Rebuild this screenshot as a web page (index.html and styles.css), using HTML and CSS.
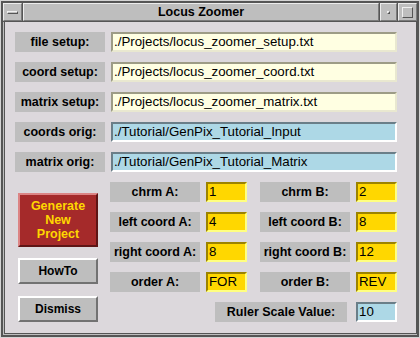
FILE: index.html
```html
<!DOCTYPE html>
<html lang="en">
<head>
    <meta charset="UTF-8">
    <meta name="viewport" content="width=device-width, initial-scale=1.0">
    <title>Locus Zoomer</title>
    <link rel="stylesheet" href="styles.css">
</head>
<body>
    <div class="window">
        <div class="titlebar">
            <div class="tb-btn tb-menu"><span class="menu-bar"></span></div>
            <div class="tb-title">Locus Zoomer</div>
            <div class="tb-btn tb-min"><span class="min-dot"></span></div>
            <div class="tb-btn tb-max"><span class="max-box"></span></div>
        </div>
        <main class="body">
            <div class="paths">
                <div class="label">file setup:</div>
                <input class="entry ivory" type="text" value="./Projects/locus_zoomer_setup.txt">
                <div class="label">coord setup:</div>
                <input class="entry ivory" type="text" value="./Projects/locus_zoomer_coord.txt">
                <div class="label">matrix setup:</div>
                <input class="entry ivory" type="text" value="./Projects/locus_zoomer_matrix.txt">
                <div class="label">coords orig:</div>
                <input class="entry blue" type="text" value="./Tutorial/GenPix_Tutorial_Input">
                <div class="label">matrix orig:</div>
                <input class="entry blue" type="text" value="./Tutorial/GenPix_Tutorial_Matrix">
            </div>
            <div class="lower">
                <div class="buttons">
                    <button class="btn btn-generate">Generate<br>New<br>Project</button>
                    <button class="btn">HowTo</button>
                    <button class="btn btn-dismiss">Dismiss</button>
                </div>
                <div class="params">
                    <div class="param-row">
                        <div class="label">chrm A:</div>
                        <input class="entry gold" type="text" value="1">
                        <div class="label label-b">chrm B:</div>
                        <input class="entry gold" type="text" value="2">
                    </div>
                    <div class="param-row">
                        <div class="label">left coord A:</div>
                        <input class="entry gold" type="text" value="4">
                        <div class="label label-b">left coord B:</div>
                        <input class="entry gold" type="text" value="8">
                    </div>
                    <div class="param-row">
                        <div class="label">right coord A:</div>
                        <input class="entry gold" type="text" value="8">
                        <div class="label label-b">right coord B:</div>
                        <input class="entry gold" type="text" value="12">
                    </div>
                    <div class="param-row">
                        <div class="label">order A:</div>
                        <input class="entry gold" type="text" value="FOR">
                        <div class="label label-b">order B:</div>
                        <input class="entry gold" type="text" value="REV">
                    </div>
                    <div class="param-row ruler">
                        <div class="label label-ruler">Ruler Scale Value:</div>
                        <input class="entry blue" type="text" value="10">
                    </div>
                </div>
            </div>
        </main>
    </div>
</body>
</html>
```

FILE: styles.css
```css
body {
    margin: 0;
    padding: 0;
    background: #dcd8dc;
    font-family: 'Liberation Sans', Arial, sans-serif;
    color: #000;
}

.window {
    width: 420px;
    height: 338px;
    box-sizing: border-box;
    padding: 3px 2px 4px 3px;
    background: #bebebe;
    box-shadow: inset 0 0 0 1px #d4d4d4, inset 0 0 0 3px #555;
    display: flex;
    flex-direction: column;
}

/* window manager title bar */
.titlebar {
    display: flex;
    gap: 1px;
    height: 20px;
    background: #555;
    padding-bottom: 1px;
    box-sizing: border-box;
    margin-right: 1px;
}

.tb-btn,
.tb-title {
    box-sizing: border-box;
    background: #bebebe;
    border: 1px solid;
    border-color: #ececec #7a7a7a #7a7a7a #ececec;
    display: flex;
    align-items: center;
    justify-content: center;
}

.tb-menu {
    width: 19px;
}

.tb-title {
    flex: 1;
    font-size: 12.5px;
    font-weight: bold;
}

.tb-min {
    width: 17px;
}

.tb-max {
    width: 19px;
}

.menu-bar {
    width: 11px;
    height: 3px;
    box-sizing: border-box;
    border: 1px solid;
    border-color: #f0f0f0 #555 #555 #f0f0f0;
}

.min-dot {
    width: 3px;
    height: 3px;
    box-sizing: border-box;
    border: 1px solid;
    border-color: #f0f0f0 #555 #555 #f0f0f0;
}

.max-box {
    width: 11px;
    height: 11px;
    box-sizing: border-box;
    border: 1px solid;
    border-color: #f0f0f0 #555 #555 #f0f0f0;
}

/* application area */
.body {
    flex: 1;
    margin: 0 1px 0 1px;
    border: 1px solid #555;
    border-top: none;
    background: #dcd8dc;
    padding: 10px 0 0 10px;
}

.paths {
    display: grid;
    grid-template-columns: 90px 286px;
    column-gap: 6px;
    row-gap: 10px;
}

.label {
    height: 20px;
    line-height: 20px;
    background: #bebebe;
    text-align: center;
    font-size: 12.5px;
    font-weight: bold;
    white-space: nowrap;
}

.entry {
    height: 20px;
    box-sizing: border-box;
    margin: 0;
    padding: 0 1px 1px 1px;
    border: 2px solid;
    font-family: 'Liberation Sans', Arial, sans-serif;
    font-size: 13.3px;
    color: #000;
    outline: none;
    width: 100%;
}

.ivory {
    background: #ffffe2;
    border-color: #9d9c86 #e9e8d0 #e9e8d0 #9d9c86;
}

.blue {
    background: #add8e6;
    border-color: #6a7e88 #fff #fff #6a7e88;
}

.gold {
    background: #ffd700;
    border-color: #9c8300 #ffff80 #ffff80 #9c8300;
}

.lower {
    display: flex;
    margin-top: 10px;
}

.buttons {
    width: 80px;
    margin-left: 3px;
    padding-top: 11px;
    display: flex;
    flex-direction: column;
}

.btn {
    height: 26px;
    margin: 0 0 11px 0;
    padding: 0;
    box-sizing: border-box;
    border: 2px solid;
    border-color: #fff #727272 #727272 #fff;
    background: #bebebe;
    font-family: 'Liberation Sans', Arial, sans-serif;
    font-size: 12px;
    font-weight: bold;
    color: #000;
}

.btn-generate {
    height: 54px;
    line-height: 14px;
    font-size: 12.5px;
    background: #a52a2a;
    color: #ffd700;
    border-color: #dc8484 #5e1515 #5e1515 #dc8484;
}

.btn-dismiss {
    margin-top: 1px;
}

.params {
    margin-left: 12px;
    width: 287px;
    display: flex;
    flex-direction: column;
    gap: 10px;
}

.param-row {
    display: flex;
    gap: 6px;
}

.param-row .label {
    width: 90px;
    flex: none;
}

.param-row .entry {
    width: 41px;
    flex: none;
}

.label-b {
    margin-left: 7px;
}

.ruler {
    justify-content: flex-end;
    gap: 9px;
}

.ruler .label-ruler {
    width: 132px;
}
```
